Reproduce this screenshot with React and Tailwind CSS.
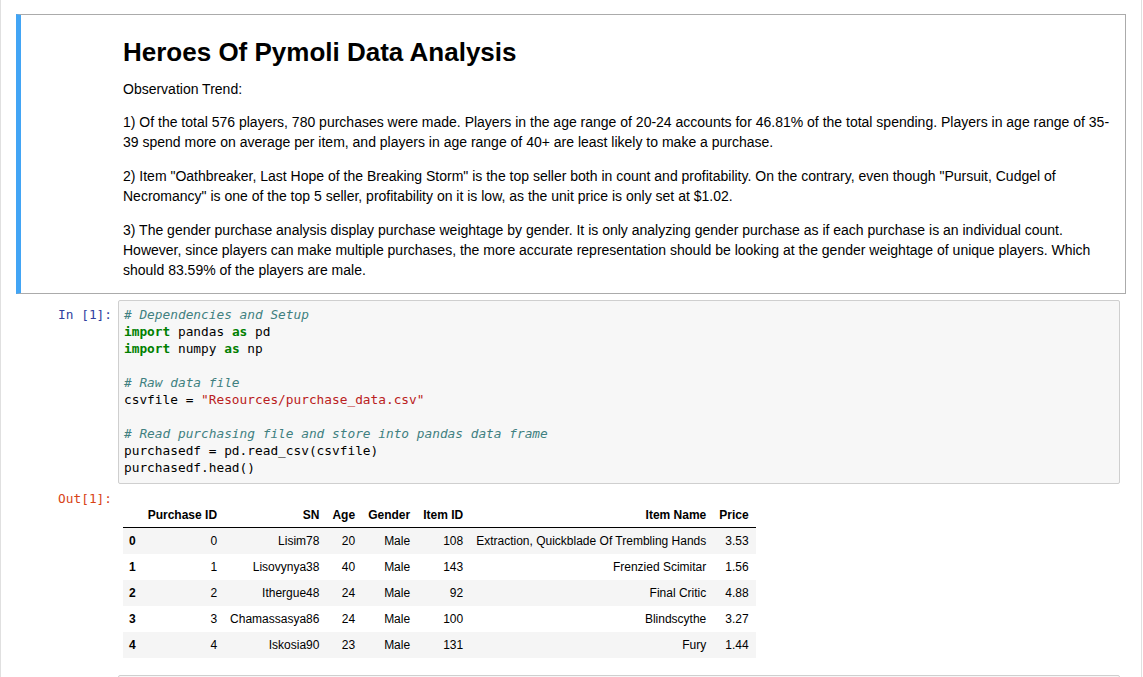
import React from "react";

const rows = [
  ["0", "0", "Lisim78", "20", "Male", "108", "Extraction, Quickblade Of Trembling Hands", "3.53"],
  ["1", "1", "Lisovynya38", "40", "Male", "143", "Frenzied Scimitar", "1.56"],
  ["2", "2", "Ithergue48", "24", "Male", "92", "Final Critic", "4.88"],
  ["3", "3", "Chamassasya86", "24", "Male", "100", "Blindscythe", "3.27"],
  ["4", "4", "Iskosia90", "23", "Male", "131", "Fury", "1.44"],
];

const headers = ["", "Purchase ID", "SN", "Age", "Gender", "Item ID", "Item Name", "Price"];

const mono = "font-['DejaVu_Sans_Mono',monospace] text-[12.8px] leading-[17px]";

function Comment({ children }) {
  return <span className="italic text-[#408080]">{children}</span>;
}

function Kw({ children }) {
  return <span className="font-bold text-[#008000]">{children}</span>;
}

export default function App() {
  return (
    <div className="min-h-screen bg-white font-['Liberation_Sans',Arial,sans-serif] text-black">
      <div className="w-[1142px] min-h-screen border-x border-[#e0e0e0] pt-[14px] px-[15px]">
        {/* markdown cell (selected) */}
        <div className="flex border border-[#ababab] border-l-[5px] border-l-[#42a5f5]">
          <div className="w-[102px] shrink-0" />
          <div className="w-[993px] pt-[23px] pb-[13px] text-[14px] leading-[20px]">
            <h1 className="text-[26px] leading-[28px] font-bold mb-[13px]">Heroes Of Pymoli Data Analysis</h1>
            <p className="mb-[13px]">Observation Trend:</p>
            <p className="mb-[14px]">
              1) Of the total 576 players, 780 purchases were made. Players in the age range of 20-24 accounts for 46.81% of the total spending. Players in age range of 35-<wbr />39 spend more on average per item, and players in age range of 40+ are least likely to make a purchase.
            </p>
            <p className="mb-[14px]">
              2) Item "Oathbreaker, Last Hope of the Breaking Storm" is the top seller both in count and profitability. On the contrary, even though "Pursuit, Cudgel of Necromancy" is one of the top 5 seller, profitability on it is low, as the unit price is only set at $1.02.
            </p>
            <p>
              3) The gender purchase analysis display purchase weightage by gender. It is only analyzing gender purchase as if each purchase is an individual count. However, since players can make multiple purchases, the more accurate representation should be looking at the gender weightage of unique players. Which should 83.59% of the players are male.
            </p>
          </div>
        </div>

        {/* code cell */}
        <div className="border border-transparent p-[5px]">
          <div className="flex">
            <div className={`w-[96px] shrink-0 text-right pr-[6px] pt-[6px] text-[#303f9f] ${mono}`}>In&nbsp;[1]:</div>
            <div className={`flex-1 bg-[#f7f7f7] border border-[#cfcfcf] rounded-[2px] pl-[5px] pt-[5px] pb-[7px] whitespace-pre ${mono}`}>
              <div><Comment># Dependencies and Setup</Comment></div>
              <div><Kw>import</Kw> pandas <Kw>as</Kw> pd</div>
              <div><Kw>import</Kw> numpy <Kw>as</Kw> np</div>
              <div>&nbsp;</div>
              <div><Comment># Raw data file</Comment></div>
              <div>csvfile = <span className="text-[#ba2121]">"Resources/purchase_data.csv"</span></div>
              <div>&nbsp;</div>
              <div><Comment># Read purchasing file and store into pandas data frame</Comment></div>
              <div>purchasedf = pd.read_csv(csvfile)</div>
              <div>purchasedf.head()</div>
            </div>
          </div>

          <div className="flex pb-[5px]">
            <div className={`w-[96px] shrink-0 text-right pr-[6px] pt-[6px] text-[#d84315] ${mono}`}>Out[1]:</div>
            <div className="pl-[5px] pt-[18px]">
              <table className="border-collapse text-[12px] leading-[14px]">
                <thead className="border-b border-black">
                  <tr>
                    {headers.map((h, i) => (
                      <th
                        key={i}
                        className={`pt-[6px] pb-[5px] text-right font-bold whitespace-nowrap ${i === 0 ? "px-[6px]" : "pl-[6px] pr-[7px]"}`}
                      >
                        {h || "\u00a0"}
                      </th>
                    ))}
                  </tr>
                </thead>
                <tbody>
                  {rows.map((r, i) => (
                    <tr key={i} className={i % 2 === 0 ? "bg-[#f5f5f5]" : ""}>
                      {r.map((c, j) =>
                        j === 0 ? (
                          <th key={j} className="px-[6px] py-[6px] text-left font-bold">{c}</th>
                        ) : (
                          <td key={j} className="pl-[6px] pr-[7px] py-[6px] text-right whitespace-nowrap">{c}</td>
                        )
                      )}
                    </tr>
                  ))}
                </tbody>
              </table>
            </div>
          </div>
        </div>

        {/* next code cell (cut off) */}
        <div className="border border-transparent p-[5px]">
          <div className="flex">
            <div className="w-[96px] shrink-0" />
            <div className="flex-1 h-[40px] bg-[#f7f7f7] border border-[#cfcfcf] rounded-[2px]" />
          </div>
        </div>
      </div>
    </div>
  );
}
